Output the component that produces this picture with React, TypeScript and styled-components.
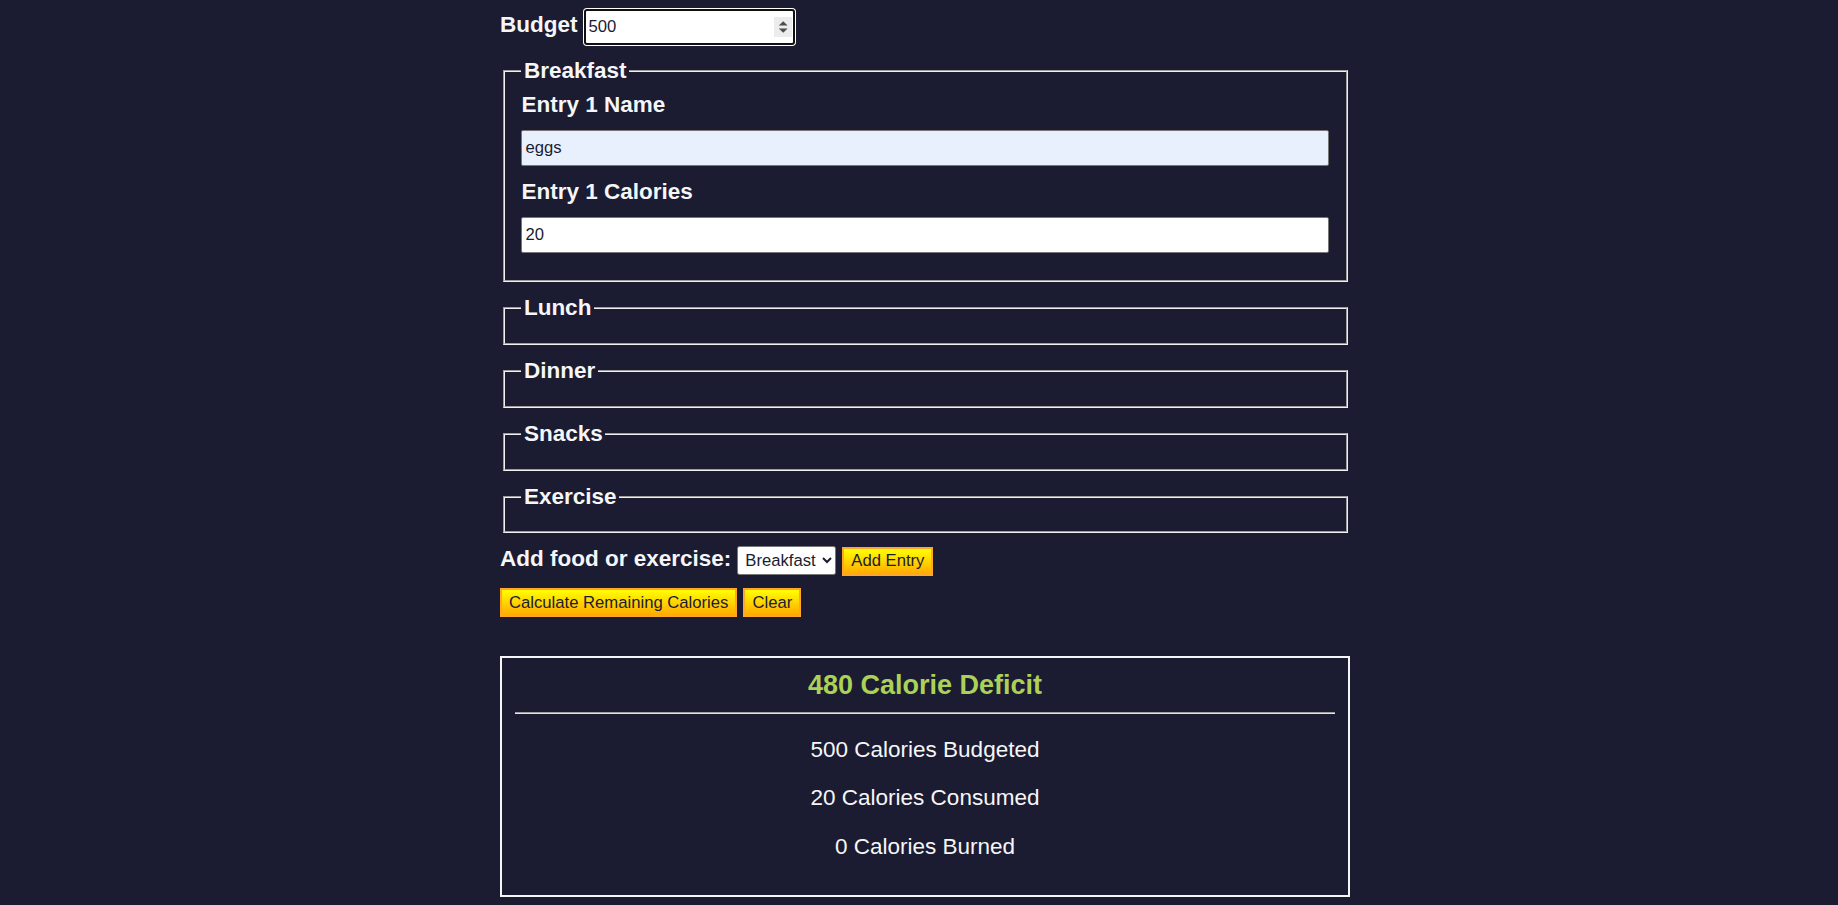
import React from "react";
import styled, { createGlobalStyle } from "styled-components";

const GlobalStyle = createGlobalStyle`
  html, body {
    margin: 0;
    padding: 0;
  }
  body {
    background: #1b1b32;
    color: #f5f6f7;
    font-family: "Liberation Sans", Arial, Helvetica, sans-serif;
    font-size: 22.5px;
  }
  *, *::before, *::after {
    box-sizing: border-box;
  }
`;

const Page = styled.main`
  padding: 9px 0 0 12px;
`;

const Container = styled.div`
  width: 850px;
  margin: 0 auto;
`;

const Form = styled.form`
  display: block;
`;

const BudgetRow = styled.div`
  display: flex;
  align-items: baseline;
  gap: 6px;
  margin-bottom: 13px;
`;

const FieldLabel = styled.label`
  font-weight: bold;
  line-height: 26px;
`;

const BudgetBox = styled.div`
  display: flex;
  align-items: center;
  width: 211px;
  height: 36px;
  padding: 0 1px 0 3px;
  background: #ffffff;
  border: 2px solid #101010;
  border-radius: 3px;
  box-shadow: 0 0 0 1px #ffffff;
`;

const BudgetInput = styled.input`
  flex: 1;
  min-width: 0;
  height: 100%;
  padding: 0;
  border: none;
  outline: none;
  background: transparent;
  color: #1b1b32;
  font-family: inherit;
  font-size: 16.67px;
  -moz-appearance: textfield;
  &::-webkit-inner-spin-button,
  &::-webkit-outer-spin-button {
    -webkit-appearance: none;
    margin: 0;
  }
`;

const Spinner = styled.svg`
  flex: none;
  display: block;
`;

const Group = styled.fieldset`
  margin: 0 2.5px 13px;
  padding: 7.9px 16.9px 14px;
  border: 2px groove #f0f0f0;
  min-inline-size: min-content;
`;

const GroupTitle = styled.legend`
  padding: 0 2.5px;
  font-weight: bold;
  line-height: 26px;
`;

const EntryList = styled.div`
  display: flex;
  flex-direction: column;
`;

const EntryLabel = styled.label`
  font-weight: bold;
  line-height: 26px;
  margin-bottom: 12.5px;
`;

const EntryInput = styled.input<{ $autofill?: boolean }>`
  height: 36px;
  margin: 0 0 12.5px;
  padding: 0 3px;
  border: 1px solid #767676;
  border-radius: 2px;
  background: ${(p) => (p.$autofill ? "#e8f0fe" : "#ffffff")};
  color: #1b1b32;
  font-family: inherit;
  font-size: 16.67px;
  outline: none;
`;

const ControlsRow = styled.div`
  display: flex;
  align-items: baseline;
  gap: 6px;
  margin-top: 2px;
  margin-bottom: 12.5px;
`;

const Dropdown = styled.select`
  height: 29px;
  padding: 0 3px;
  border: 1px solid #767676;
  border-radius: 2.5px;
  background: #ffffff;
  color: #1b1b32;
  font-family: inherit;
  font-size: 16.67px;
`;

const ActionButton = styled.button`
  height: 29px;
  padding: 0 7px;
  border: 2px solid #ffa62b;
  background: linear-gradient(#ffff00, #ffaa00);
  color: #1b1b32;
  font-family: inherit;
  font-size: 16.67px;
  cursor: pointer;
`;

const ActionsRow = styled.div`
  display: flex;
  align-items: baseline;
  gap: 6px;
  margin-bottom: 12.5px;
`;

const Output = styled.div`
  margin-top: 39px;
  padding: 13px;
  border: 2px solid #f5f6f7;
  text-align: center;
`;

const Verdict = styled.div<{ $tone: "deficit" | "surplus" }>`
  font-size: 27px;
  line-height: 29px;
  font-weight: bold;
  color: ${(p) => (p.$tone === "deficit" ? "#acd157" : "#ffadad")};
`;

const Divider = styled.hr`
  margin: 12px 0 11px;
  height: 0;
  border: none;
  border-top: 1px solid #a0a0a0;
  border-bottom: 1px solid #e4e4e4;
`;

const Stat = styled.p`
  margin: 22.5px 0;
  line-height: 26px;
`;

const meals = ["Lunch", "Dinner", "Snacks", "Exercise"];

export default function App() {
  return (
    <>
      <GlobalStyle />
      <Page>
        <Container>
          <Form onSubmit={(e) => e.preventDefault()}>
            <BudgetRow>
              <FieldLabel htmlFor="budget">Budget</FieldLabel>
              <BudgetBox>
                <BudgetInput id="budget" type="number" defaultValue="500" />
                <Spinner width="18" height="20" viewBox="0 0 18 20">
                  <rect width="18" height="20" fill="#ececec" />
                  <path d="M4.8 8.6 L9.2 4.2 L13.6 8.6 Z" fill="#4d4d4d" />
                  <path d="M4.8 11.4 L9.2 15.8 L13.6 11.4 Z" fill="#4d4d4d" />
                </Spinner>
              </BudgetBox>
            </BudgetRow>

            <Group>
              <GroupTitle>Breakfast</GroupTitle>
              <EntryList>
                <EntryLabel htmlFor="breakfast-1-name">Entry 1 Name</EntryLabel>
                <EntryInput id="breakfast-1-name" type="text" defaultValue="eggs" $autofill />
                <EntryLabel htmlFor="breakfast-1-calories">Entry 1 Calories</EntryLabel>
                <EntryInput id="breakfast-1-calories" type="text" defaultValue="20" />
              </EntryList>
            </Group>

            {meals.map((m) => (
              <Group key={m}>
                <GroupTitle>{m}</GroupTitle>
                <EntryList />
              </Group>
            ))}

            <ControlsRow>
              <FieldLabel htmlFor="entry-dropdown">Add food or exercise:</FieldLabel>
              <Dropdown id="entry-dropdown" defaultValue="breakfast">
                <option value="breakfast">Breakfast</option>
                <option value="lunch">Lunch</option>
                <option value="dinner">Dinner</option>
                <option value="snacks">Snacks</option>
                <option value="exercise">Exercise</option>
              </Dropdown>
              <ActionButton type="button">Add Entry</ActionButton>
            </ControlsRow>

            <ActionsRow>
              <ActionButton type="submit">Calculate Remaining Calories</ActionButton>
              <ActionButton type="button">Clear</ActionButton>
            </ActionsRow>
          </Form>

          <Output>
            <Verdict $tone="deficit">480 Calorie Deficit</Verdict>
            <Divider />
            <Stat>500 Calories Budgeted</Stat>
            <Stat>20 Calories Consumed</Stat>
            <Stat>0 Calories Burned</Stat>
          </Output>
        </Container>
      </Page>
    </>
  );
}
